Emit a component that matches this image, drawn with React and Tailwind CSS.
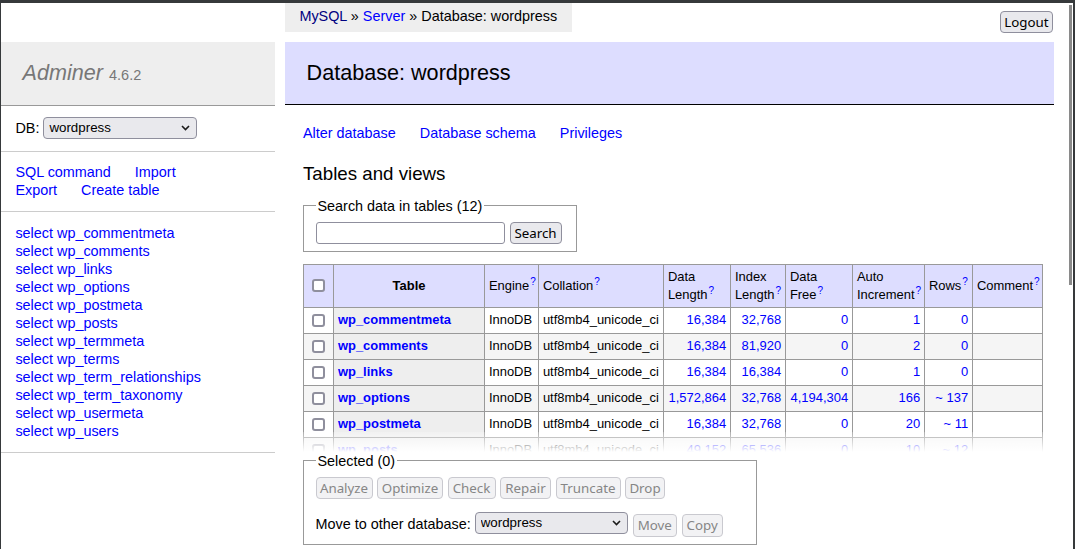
import React from "react";

const sideTables = [
  "wp_commentmeta",
  "wp_comments",
  "wp_links",
  "wp_options",
  "wp_postmeta",
  "wp_posts",
  "wp_termmeta",
  "wp_terms",
  "wp_term_relationships",
  "wp_term_taxonomy",
  "wp_usermeta",
  "wp_users",
];

const tables = [
  { name: "wp_commentmeta", data: "16,384", index: "32,768", free: "0", auto: "1", rows: "0" },
  { name: "wp_comments", data: "16,384", index: "81,920", free: "0", auto: "2", rows: "0" },
  { name: "wp_links", data: "16,384", index: "16,384", free: "0", auto: "1", rows: "0" },
  { name: "wp_options", data: "1,572,864", index: "32,768", free: "4,194,304", auto: "166", rows: "~ 137" },
  { name: "wp_postmeta", data: "16,384", index: "32,768", free: "0", auto: "20", rows: "~ 11" },
  { name: "wp_posts", data: "49,152", index: "65,536", free: "0", auto: "10", rows: "~ 12" },
];

function Help() {
  return (
    <sup className="text-[10px] text-[#00f] ml-[1px]">
      <a href="#">?</a>
    </sup>
  );
}

function Checkbox() {
  return (
    <input
      type="checkbox"
      className="block appearance-none ml-[4.5px] w-[13px] h-[13px] border-2 border-[#8f8f9d] rounded-[3px] bg-white"
    />
  );
}

function Btn({ children, className = "", disabled }) {
  return (
    <button
      disabled={disabled}
      className={`h-[22px] shrink-0 rounded-[4px] border text-center text-[13.33px] leading-[18px] font-['Noto_Sans',sans-serif] ${
        disabled
          ? "bg-[#f2f2f4] border-[#c9c9cf] text-[#868686]"
          : "bg-[#e9e9ed] border-[#8f8f9d] text-black"
      } ${className}`}
    >
      {children}
    </button>
  );
}

function DbSelect({ className = "" }) {
  return (
    <span className={`relative inline-flex h-[22px] shrink-0 ${className}`}>
      <select className="appearance-none w-full h-full bg-[#e9e9ed] border border-[#8f8f9d] rounded-[4px] pl-[5px] text-[13.33px] leading-[18px] text-black">
        <option>wordpress</option>
      </select>
      <svg
        className="pointer-events-none absolute right-[7px] top-[8px]"
        width="9"
        height="6"
        viewBox="0 0 9 6"
      >
        <path d="M1 1l3.5 3.5L8 1" fill="none" stroke="#1b1b1b" strokeWidth="1.6" />
      </svg>
    </span>
  );
}

function Sidebar() {
  return (
    <div className="w-[274px] shrink-0 pt-[39px]">
      <h1 className="h-[63.5px] bg-[#eee] border-b border-[#999] px-[21.6px] py-[17.28px] text-[21.6px] leading-[27px] text-[#777] font-normal">
        <a href="#" className="italic">
          Adminer
        </a>{" "}
        <span className="text-[14.5px] leading-none">4.6.2</span>
      </h1>
      <p className="flex items-center px-[14.4px] py-[11.52px] border-b border-[#ccc]">
        <span>DB:&nbsp;</span>
        <DbSelect className="w-[154px]" />
      </p>
      <p className="px-[14.4px] py-[11.52px] border-b border-[#ccc] text-[#00f]">
        <a href="#" className="mr-[20px] whitespace-nowrap">SQL command</a>{" "}
        <a href="#" className="mr-[20px] whitespace-nowrap">Import</a>{" "}
        <a href="#" className="mr-[20px] whitespace-nowrap">Export</a>{" "}
        <a href="#" className="mr-[20px] whitespace-nowrap">Create table</a>
      </p>
      <ul className="px-[14.4px] pt-[12.5px] pb-[11.52px] border-b border-[#ccc] text-[#00f] whitespace-nowrap">
        {sideTables.map((t) => (
          <li key={t}>
            <a href="#">select</a> <a href="#">{t}</a>
          </li>
        ))}
      </ul>
    </div>
  );
}

function TablesGrid() {
  const head = "border border-[#999] bg-[#ddf] px-[3.9px] py-[2.6px] align-middle leading-[18px]";
  const th = `${head} text-left font-normal`;
  const td = "border border-[#999] px-[3.9px] py-[2.6px] align-middle";
  return (
    <table className="table-fixed border-collapse w-[739px] mt-[12px] text-[12.96px] leading-[16px]">
      <colgroup>
        <col className="w-[30px]" />
        <col className="w-[151px]" />
        <col className="w-[54px]" />
        <col className="w-[125px]" />
        <col className="w-[67px]" />
        <col className="w-[55px]" />
        <col className="w-[67px]" />
        <col className="w-[72px]" />
        <col className="w-[48px]" />
        <col className="w-[70px]" />
      </colgroup>
      <thead>
        <tr className="h-[42px]">
          <td className={th}>
            <Checkbox />
          </td>
          <th className={`${head} text-center font-bold`}>Table</th>
          <td className={th}>
            Engine<Help />
          </td>
          <td className={th}>
            Collation<Help />
          </td>
          <td className={th}>
            Data Length<Help />
          </td>
          <td className={th}>
            Index Length<Help />
          </td>
          <td className={th}>
            Data Free<Help />
          </td>
          <td className={th}>
            Auto Increment<Help />
          </td>
          <td className={th}>
            Rows<Help />
          </td>
          <td className={th}>
            Comment<Help />
          </td>
        </tr>
      </thead>
      <tbody>
        {tables.map((t, i) => {
          const bg = i % 2 === 1 ? "bg-[#f5f5f5]" : "bg-white";
          const num = `${td} ${bg} text-right text-[#00f] whitespace-nowrap`;
          return (
            <tr key={t.name} className="h-[26px]">
              <td className={`${td} ${bg}`}>
                <Checkbox />
              </td>
              <th className={`${td} bg-[#eee] text-left font-bold text-[#00f]`}>
                <a href="#">{t.name}</a>
              </th>
              <td className={`${td} ${bg}`}>InnoDB</td>
              <td className={`${td} ${bg} whitespace-nowrap overflow-hidden`}>utf8mb4_unicode_ci</td>
              <td className={num}>
                <a href="#">{t.data}</a>
              </td>
              <td className={num}>
                <a href="#">{t.index}</a>
              </td>
              <td className={num}>
                <a href="#">{t.free}</a>
              </td>
              <td className={num}>
                <a href="#">{t.auto}</a>
              </td>
              <td className={num}>
                <a href="#">{t.rows}</a>
              </td>
              <td className={`${td} ${bg}`}></td>
            </tr>
          );
        })}
      </tbody>
    </table>
  );
}

function Footer() {
  return (
    <div className="relative -mt-[32px] mr-[-15px]">
      <div className="h-[20px] bg-linear-to-b from-white/20 to-white" />
      <div className="bg-white pb-[7.2px]">
        <fieldset className="w-[454px] border border-[#999] px-[11.52px] pb-[7.2px]">
          <legend className="px-[2px]">Selected (0)</legend>
          <div className="flex gap-[4.5px] pt-[7.2px]">
            <Btn disabled className="w-[57px]">Analyze</Btn>
            <Btn disabled className="w-[66px]">Optimize</Btn>
            <Btn disabled className="w-[48px]">Check</Btn>
            <Btn disabled className="w-[51px]">Repair</Btn>
            <Btn disabled className="w-[65px]">Truncate</Btn>
            <Btn disabled className="w-[40px]">Drop</Btn>
          </div>
          <p className="flex items-start mt-[13px]">
            <span className="whitespace-nowrap mt-[3px]">Move to other database:&nbsp;</span>
            <DbSelect className="w-[153px]" />
            <Btn disabled className="w-[44px] h-[23px] ml-[5px] mt-[2px]">Move</Btn>
            <Btn disabled className="w-[41px] h-[23px] ml-[5px] mt-[2px]">Copy</Btn>
          </p>
        </fieldset>
      </div>
    </div>
  );
}

function Content() {
  return (
    <div className="ml-[10px] w-[769px] shrink-0">
      <div className="flex h-[39px] items-start justify-between">
        <p className="bg-[#eee] h-[28.8px] leading-[26px] px-[14.4px] whitespace-nowrap">
          <a href="#" className="text-[#000080]">MySQL</a> »{" "}
          <a href="#" className="text-[#00f]">Server</a> » Database: wordpress
        </p>
        <Btn className="w-[53px] h-[21px] mt-[8px] mr-[1px]">Logout</Btn>
      </div>
      <h2 className="bg-[#ddf] border-b border-black px-[21.6px] py-[17.28px] text-[21.6px] leading-[27px] font-normal">
        Database: wordpress
      </h2>
      <div className="pl-[18px]">
        <p className="mt-[19px] text-[#00f]">
          <a href="#" className="mr-[20px]">Alter database</a>{" "}
          <a href="#" className="mr-[20px]">Database schema</a>{" "}
          <a href="#" className="mr-[20px]">Privileges</a>
        </p>
        <h3 className="mt-[20.5px] text-[18.72px] leading-[23.4px] font-normal">Tables and views</h3>
        <fieldset className="mt-[11.52px] w-[274px] border border-[#999] px-[11.52px] pb-[7.2px]">
          <legend className="px-[2px]">Search data in tables (12)</legend>
          <div className="flex items-center gap-[5px] pt-[7.2px]">
            <input
              type="text"
              className="w-[189px] h-[22px] border border-[#8f8f9d] rounded-[3px] bg-white"
            />
            <Btn className="w-[52px]">Search</Btn>
          </div>
        </fieldset>
        <TablesGrid />
        <Footer />
      </div>
    </div>
  );
}

export default function App() {
  return (
    <div className="w-[1075px] h-[549px] overflow-hidden flex flex-col bg-[#36393b] font-['Liberation_Sans',Arial,sans-serif] text-[14.4px] leading-[18px] text-black">
      <div className="h-[3px] shrink-0" />
      <div className="flex flex-1 min-h-0">
        <div className="w-[1px] shrink-0" />
        <div className="w-[1068px] shrink-0 bg-white overflow-hidden flex items-start">
          <Sidebar />
          <Content />
        </div>
        <div className="w-[4px] shrink-0 bg-white">
          <div className="mt-[2px] h-[280px] w-[3px] bg-[#8a8a8a]" />
        </div>
      </div>
    </div>
  );
}
